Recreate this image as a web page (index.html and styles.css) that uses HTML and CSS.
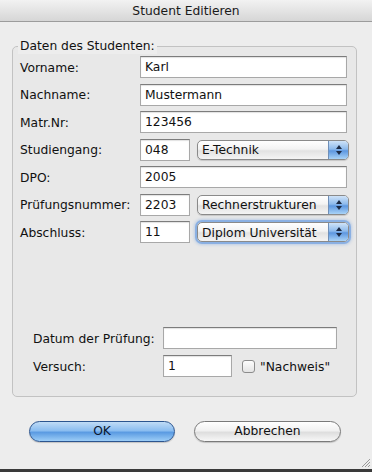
FILE: index.html
```html
<!DOCTYPE html>
<html>
<head>
<meta charset="utf-8">
<link rel="stylesheet" href="styles.css">
</head>
<body>
<div class="window">
  <div class="titlebar">Student Editieren</div>
  <div class="content">
    <fieldset class="group">
      <legend>Daten des Studenten:</legend>
      <div class="rows">
        <div class="row"><span class="label">Vorname:</span><div class="field wide">Karl</div></div>
        <div class="row"><span class="label">Nachname:</span><div class="field wide">Mustermann</div></div>
        <div class="row"><span class="label">Matr.Nr:</span><div class="field wide">123456</div></div>
        <div class="row"><span class="label">Studiengang:</span><div class="field short">048</div>
          <div class="popup"><span class="ptext">E-Technik</span><span class="arrows"><svg width="8" height="12" viewBox="0 0 8 12"><path d="M4 1 L7 5 L1 5 Z M4 11 L7 7 L1 7 Z" fill="#1c2a44"/></svg></span></div></div>
        <div class="row"><span class="label">DPO:</span><div class="field wide">2005</div></div>
        <div class="row"><span class="label">Prüfungsnummer:</span><div class="field short">2203</div>
          <div class="popup"><span class="ptext">Rechnerstrukturen</span><span class="arrows"><svg width="8" height="12" viewBox="0 0 8 12"><path d="M4 1 L7 5 L1 5 Z M4 11 L7 7 L1 7 Z" fill="#1c2a44"/></svg></span></div></div>
        <div class="row"><span class="label">Abschluss:</span><div class="field short">11</div>
          <div class="popup focused"><span class="ptext">Diplom Universität</span><span class="arrows"><svg width="8" height="12" viewBox="0 0 8 12"><path d="M4 1 L7 5 L1 5 Z M4 11 L7 7 L1 7 Z" fill="#1c2a44"/></svg></span></div></div>
      </div>
      <div class="lower">
        <div class="row"><span class="label2">Datum der Prüfung:</span><div class="field date"></div></div>
        <div class="row"><span class="label2">Versuch:</span><div class="field try">1</div>
          <span class="checkbox"></span><span class="cblabel">"Nachweis"</span></div>
      </div>
    </fieldset>
    <div class="buttons">
      <div class="btn default">OK</div>
      <div class="btn">Abbrechen</div>
    </div>
  </div>
  <svg class="grip" width="10" height="10" viewBox="0 0 10 10"><path d="M9 1 L1 9 M9 4 L4 9 M9 7 L7 9" stroke="#9a9a9a" stroke-width="1"/></svg>
</div>
</body>
</html>
```
FILE: styles.css
```css
html, body {
  margin: 0;
  padding: 0;
  background: #3a3a3a;
}
body {
  width: 372px;
  height: 472px;
  overflow: hidden;
  font-family: "DejaVu Sans", "Lucida Grande", sans-serif;
  font-size: 12.3px;
  color: #111;
}
.window {
  position: relative;
  width: 372px;
  height: 469px;
  background: #ededed;
  display: flex;
  flex-direction: column;
}
.titlebar {
  height: 21px;
  line-height: 22px;
  text-align: center;
  background: linear-gradient(#f2f2f2, #d6d6d6);
  border-bottom: 1px solid #9c9c9c;
  color: #1a1a1a;
}
.content {
  flex: 1;
  display: flex;
  flex-direction: column;
  padding-top: 16px;
}
.group {
  box-sizing: border-box;
  width: 345px;
  margin: 0 0 0 12px;
  padding: 2px 7px 19px 7px;
  border: 1px solid #c2c2c2;
  border-radius: 5px;
  background: #e8e8e8;
  min-width: 0;
}
.group legend {
  padding: 0 2px;
  margin-left: -2px;
  line-height: 16px;
  background: #ededed;
}
.rows {
  display: flex;
  flex-direction: column;
  gap: 5.5px;
}
.row {
  display: flex;
  align-items: center;
  height: 22px;
}
.label {
  width: 120px;
  flex: none;
  padding-top: 1px;
}
.field {
  box-sizing: border-box;
  height: 22px;
  background: #fff;
  border: 1px solid #a8a8a8;
  border-top-color: #7c7c7c;
  box-shadow: inset 0 1px 1px rgba(0,0,0,0.12);
  padding: 3px 0 0 4px;
  flex: none;
  line-height: 15px;
}
.wide { width: 207px; }
.short { width: 50px; }
.popup {
  box-sizing: border-box;
  margin-left: 7px;
  width: 152px;
  height: 20px;
  border: 1px solid #8a8a8a;
  border-radius: 5px;
  background: linear-gradient(#ffffff, #f3f3f3 45%, #e2e2e2 55%, #f4f4f4);
  display: flex;
  align-items: center;
  overflow: hidden;
  box-shadow: 0 1px 1px rgba(0,0,0,0.15);
}
.popup.focused {
  box-shadow: 0 0 0 2px rgba(120,165,225,0.75), 0 0 3px 3px rgba(120,165,225,0.4);
}
.ptext {
  flex: 1;
  padding-left: 4px;
  white-space: nowrap;
  overflow: hidden;
  padding-top: 1px;
}
.arrows {
  width: 19px;
  height: 18px;
  flex: none;
  display: flex;
  align-items: center;
  justify-content: center;
  background: linear-gradient(#cfe3f8, #8dbaec 45%, #5d97e0 55%, #a9d3f7);
  border-left: 1px solid #6f8fb8;
}
.lower {
  margin-top: 84px;
  padding-left: 13px;
  display: flex;
  flex-direction: column;
  gap: 6px;
}
.label2 {
  width: 130px;
  flex: none;
  padding-top: 1px;
}
.date { width: 174px; }
.try { width: 69px; }
.checkbox {
  box-sizing: border-box;
  width: 13px;
  height: 13px;
  margin-left: 10px;
  border: 1px solid #8c8c8c;
  border-radius: 3px;
  background: linear-gradient(#fdfdfd, #e4e4e4);
  flex: none;
}
.cblabel {
  margin-left: 5px;
  padding-top: 1px;
}
.buttons {
  display: flex;
  gap: 19px;
  margin-top: 24px;
  padding-left: 29px;
}
.btn {
  box-sizing: border-box;
  width: 147px;
  height: 21px;
  border: 1px solid #7a7a7a;
  border-radius: 11px;
  background: linear-gradient(#ffffff, #f1f1f1 45%, #dedede 55%, #f7f7f7);
  text-align: center;
  line-height: 19px;
  box-shadow: 0 1px 1px rgba(0,0,0,0.18);
}
.btn.default {
  width: 146px;
  border-color: #2c558f;
  background: linear-gradient(#c0dcf6, #8bbdf0 45%, #5b9be2 55%, #9ccdf7);
  color: #0b1730;
}
.grip {
  position: absolute;
  right: 1px;
  bottom: 1px;
}
```
